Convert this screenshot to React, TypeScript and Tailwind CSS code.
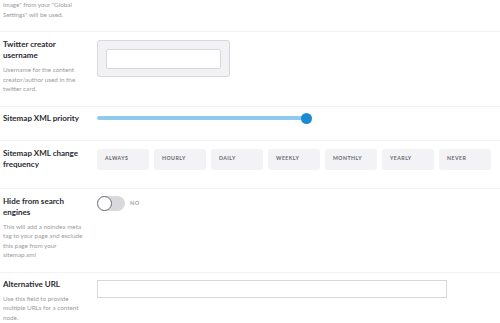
const frequencies = ["Always", "Hourly", "Daily", "Weekly", "Monthly", "Yearly", "Never"];

function Label({ children }: { children: React.ReactNode }) {
  return <div className="text-[8px] font-bold leading-[11px] text-[#2a2a30]">{children}</div>;
}

function Desc({ children }: { children: React.ReactNode }) {
  return <div className="mt-[4px] text-[6.3px] leading-[9.5px] text-[#9b9b9e]">{children}</div>;
}

export default function App() {
  return (
    <div className="h-[323px] w-[500px] overflow-hidden bg-white font-['Lato','Liberation_Sans',sans-serif]">
      {/* tail of previous property */}
      <div className="border-b border-[#f2f2f4] pb-[12px] pl-[3px]">
        <div className="w-[80px] text-[6.3px] leading-[9.5px] text-[#9b9b9e]">
          image" from your "Global Settings" will be used.
        </div>
      </div>

      <div className="flex border-b border-[#f2f2f4] pb-[12px] pl-[3px] pt-[7px]">
        <div className="w-[94px] shrink-0 pr-[10px]">
          <Label>Twitter creator username</Label>
          <Desc>Username for the content creator/author used in the twitter card.</Desc>
        </div>
        <div className="mt-[1px] h-[37px] w-[133px] rounded-[3px] border border-[#d8d7dc] bg-[#f2f2f4] p-[8px]">
          <div className="h-[20px] w-full rounded-[2px] border border-[#d8d7dc] bg-white" />
        </div>
      </div>

      <div className="flex items-center border-b border-[#f2f2f4] pb-[16px] pl-[3px] pt-[6px]">
        <div className="w-[94px] shrink-0">
          <Label>Sitemap XML priority</Label>
        </div>
        <div className="relative flex h-[11px] w-[215px] items-center">
          <div className="h-[4px] w-[210px] rounded-full bg-[#8fcbee]" />
          <div className="absolute left-[204px] top-[0px] h-[11px] w-[11px] rounded-full bg-[#1b8ad3]" />
        </div>
      </div>

      <div className="flex border-b border-[#f2f2f4] pb-[18px] pl-[3px] pt-[7px]">
        <div className="w-[94px] shrink-0 pr-[6px]">
          <Label>Sitemap XML change frequency</Label>
        </div>
        <div className="mt-[1px] flex h-[21px] gap-[5px]">
          {frequencies.map((f) => (
            <div
              key={f}
              className="flex h-[21px] w-[52px] items-center rounded-[3px] bg-[#f3f3f5] pl-[8px] text-[5.2px] font-bold uppercase tracking-[0.09em] text-[#68666e]"
            >
              {f}
            </div>
          ))}
        </div>
      </div>

      <div className="flex border-b border-[#f2f2f4] pb-[12px] pl-[3px] pt-[7px]">
        <div className="w-[94px] shrink-0 pr-[10px]">
          <Label>Hide from search engines</Label>
          <Desc>This will add a noindex meta tag to your page and exclude this page from your sitemap.xml</Desc>
        </div>
        <div className="flex h-[16px] items-center gap-[5px]">
          <div className="relative h-[15px] w-[28px] rounded-full bg-[#d9d8dd]">
            <div className="absolute left-0 top-0 h-[15px] w-[15px] rounded-full border-[1.5px] border-[#6f6e74] bg-white" />
          </div>
          <span className="text-[5.6px] font-bold tracking-[0.08em] text-[#a2a1a6]">NO</span>
        </div>
      </div>

      <div className="flex pl-[3px] pt-[6px]">
        <div className="w-[94px] shrink-0 pr-[10px]">
          <Label>Alternative URL</Label>
          <Desc>Use this field to provide multiple URLs for a content node.</Desc>
        </div>
        <div className="mt-[1px] h-[18px] w-[350px] border border-[#d8d8da] bg-white" />
      </div>
    </div>
  );
}
